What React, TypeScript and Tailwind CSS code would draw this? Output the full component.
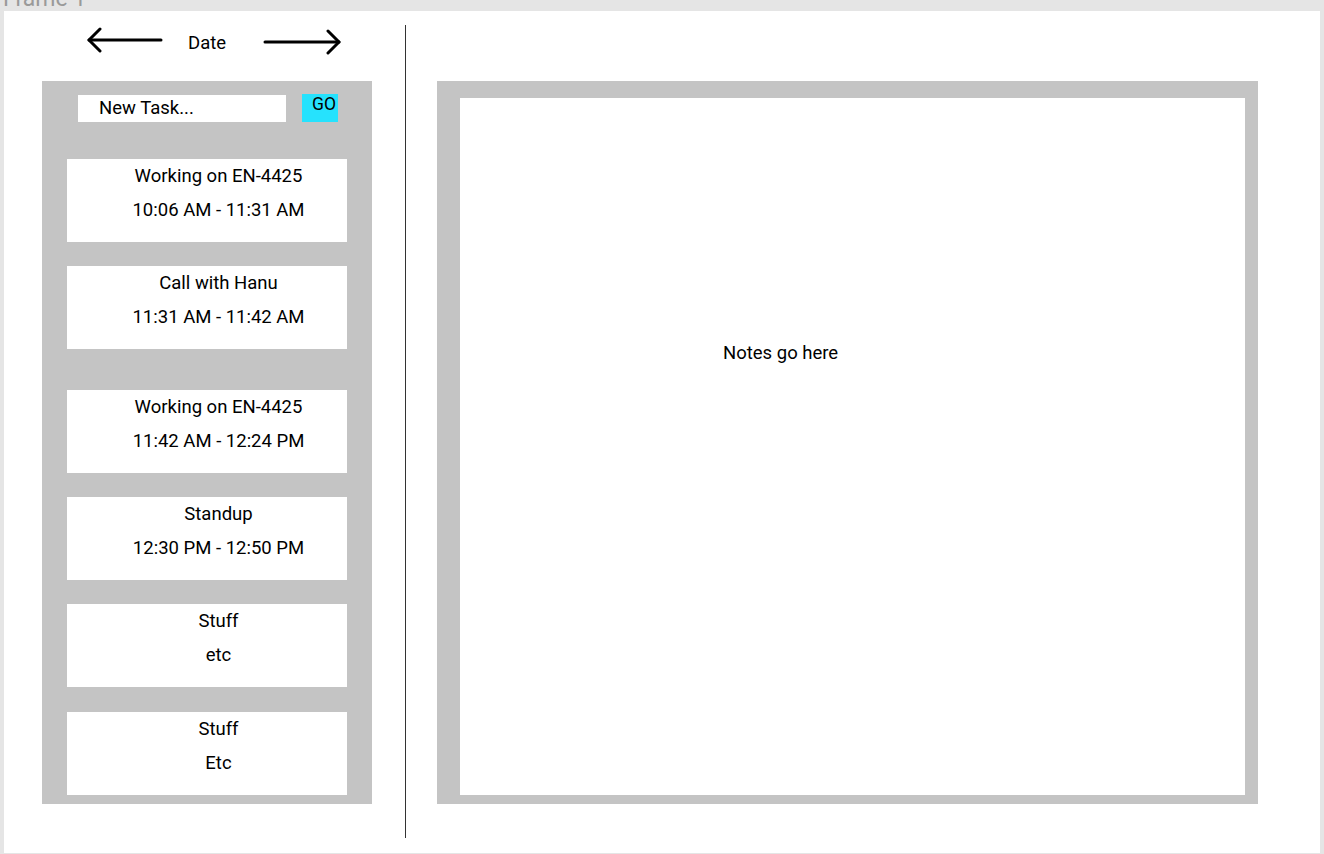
import React from 'react'

const tasks = [
  { title: 'Working on EN-4425', time: '10:06 AM - 11:31 AM', gap: 'mt-[37px]' },
  { title: 'Call with Hanu', time: '11:31 AM - 11:42 AM', gap: 'mt-[24px]' },
  { title: 'Working on EN-4425', time: '11:42 AM - 12:24 PM', gap: 'mt-[41px]' },
  { title: 'Standup', time: '12:30 PM - 12:50 PM', gap: 'mt-[24px]' },
  { title: 'Stuff', time: 'etc', gap: 'mt-[24px]' },
  { title: 'Stuff', time: 'Etc', gap: 'mt-[25px]' },
]

function ArrowLeft() {
  return (
    <svg width="76" height="26" viewBox="0 0 76 26" fill="none" stroke="#000" strokeWidth="3" strokeLinecap="round" strokeLinejoin="round">
      <path d="M2 13H74" />
      <path d="M13 2L2 13L13 24" />
    </svg>
  )
}

function ArrowRight() {
  return (
    <svg width="78" height="26" viewBox="0 0 78 26" fill="none" stroke="#000" strokeWidth="3" strokeLinecap="round" strokeLinejoin="round">
      <path d="M2 13H76" />
      <path d="M65 2L76 13L65 24" />
    </svg>
  )
}

function TaskCard({ title, time, gap }: { title: string; time: string; gap: string }) {
  return (
    <div className={`${gap} ml-[25px] w-[280px] h-[83px] bg-white pl-[23px] pt-[6px] text-center text-[18.5px] leading-[22px] text-black`}>
      <div>{title}</div>
      <div className="mt-[12px]">{time}</div>
    </div>
  )
}

export default function App() {
  return (
    <div className="w-[1324px] h-[854px] bg-[#e5e5e5] overflow-hidden" style={{ fontFamily: 'Roboto, "Noto Sans", sans-serif' }}>
      <div className="h-[11px] overflow-hidden pl-[3px]">
        <div className="-mt-[13px] text-[23px] leading-[23px] text-[#9a9a9a]">Frame 1</div>
      </div>

      <div className="ml-[4px] w-[1316px] h-[842px] bg-white flex items-start">
        {/* left column */}
        <div className="ml-[38px] w-[330px] flex flex-col">
          <div className="h-[70px] flex items-start pt-[16px]">
            <div className="ml-[45px]">
              <ArrowLeft />
            </div>
            <div className="ml-[25px] mt-[5px] text-[18.5px] leading-[22px] text-black">Date</div>
            <div className="ml-[37px] mt-[2px]">
              <ArrowRight />
            </div>
          </div>

          <div className="h-[723px] bg-[#c4c4c4] flex flex-col pt-[13px]">
            <div className="flex items-start">
              <div className="ml-[36px] mt-[1px] w-[208px] h-[27px] bg-white pl-[21px] text-[18.5px] leading-[27px] text-black">
                New Task...
              </div>
              <div className="ml-[16px] w-[36px] h-[28px] bg-[#26e2fd] pl-[10px] text-[17.5px] leading-[20px] text-black cursor-pointer">
                GO
              </div>
            </div>

            {tasks.map((t, i) => (
              <TaskCard key={i} title={t.title} time={t.time} gap={t.gap} />
            ))}
          </div>
        </div>

        {/* divider */}
        <div className="ml-[33px] mt-[14px] w-px h-[813px] bg-[#333]" />

        {/* notes */}
        <div className="ml-[31px] mt-[70px] w-[821px] h-[723px] bg-[#c4c4c4] pl-[23px] pt-[17px] pr-[13px] pb-[9px]">
          <div className="w-full h-full bg-white pt-[244px] pl-[263px] text-[18.5px] leading-[22px] text-black">
            Notes go here
          </div>
        </div>
      </div>
    </div>
  )
}
